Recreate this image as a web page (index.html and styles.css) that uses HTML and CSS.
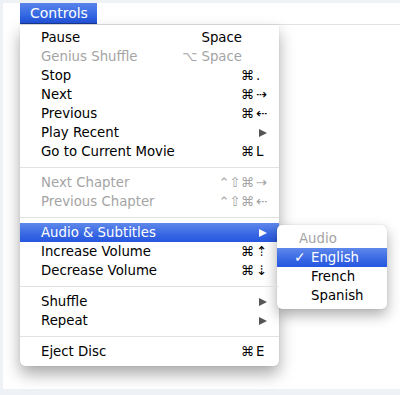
FILE: index.html
```html
<!DOCTYPE html>
<html lang="en">
<head>
    <meta charset="UTF-8">
    <title>Controls Menu</title>
    <link rel="stylesheet" href="styles.css">
</head>
<body>
    <div class="screen">
        <div class="menubar">
            <span class="title">Controls</span>
        </div>

        <div class="menu">
            <div class="item"><span class="label">Pause</span><span class="mods spaced">Space</span><span class="key"></span></div>
            <div class="item off"><span class="label">Genius Shuffle</span><span class="mods spaced">&#8997; Space</span><span class="key"></span></div>
            <div class="item"><span class="label">Stop</span><span class="mods">&#8984;</span><span class="key">.</span></div>
            <div class="item"><span class="label">Next</span><span class="mods">&#8984;</span><span class="key">&#8674;</span></div>
            <div class="item"><span class="label">Previous</span><span class="mods">&#8984;</span><span class="key">&#8672;</span></div>
            <div class="item"><span class="label">Play Recent</span><span class="key"><i class="arrow"></i></span></div>
            <div class="item"><span class="label">Go to Current Movie</span><span class="mods">&#8984;</span><span class="key">L</span></div>
            <div class="sep"></div>
            <div class="item off"><span class="label">Next Chapter</span><span class="mods">&#8963;&#8679;&#8984;</span><span class="key">&#8674;</span></div>
            <div class="item off"><span class="label">Previous Chapter</span><span class="mods">&#8963;&#8679;&#8984;</span><span class="key">&#8672;</span></div>
            <div class="sep"></div>
            <div class="item on has-sub">
                <span class="label">Audio &amp; Subtitles</span><span class="key"><i class="arrow"></i></span>
                <div class="submenu">
                    <div class="subitem head">Audio</div>
                    <div class="subitem on"><span class="check">&#10003;</span>English</div>
                    <div class="subitem">French</div>
                    <div class="subitem">Spanish</div>
                </div>
            </div>
            <div class="item"><span class="label">Increase Volume</span><span class="mods">&#8984;</span><span class="key">&#8673;</span></div>
            <div class="item"><span class="label">Decrease Volume</span><span class="mods">&#8984;</span><span class="key">&#8675;</span></div>
            <div class="sep"></div>
            <div class="item"><span class="label">Shuffle</span><span class="key"><i class="arrow"></i></span></div>
            <div class="item"><span class="label">Repeat</span><span class="key"><i class="arrow"></i></span></div>
            <div class="sep"></div>
            <div class="item"><span class="label">Eject Disc</span><span class="mods">&#8984;</span><span class="key">E</span></div>
        </div>
    </div>
</body>
</html>
```

FILE: styles.css
```css
:root {
    --frame: #eef2f7;
    --text: #000;
    --disabled: #a4a4a4;
    --line: #e2e2e2;
    --select: linear-gradient(#5f88eb, #3767e3 60%, #2656df);
}

html, body {
    margin: 0;
    padding: 0;
}

body {
    width: 400px;
    height: 395px;
    background-color: var(--frame);
    font-family: "DejaVu Sans", "Liberation Sans", sans-serif;
    font-size: 13.3px;
    color: var(--text);
    overflow: hidden;
}

.screen {
    margin: 3px 0 0 3px;
    height: 386px;
    background-color: #fff;
}

.menubar {
    margin-left: 17px;
    height: 21px;
    border-bottom: 1px solid var(--line);
    display: flex;
}

.menubar .title {
    display: block;
    height: 21px;
    line-height: 21px;
    padding: 0 9px 0 10px;
    font-size: 14px;
    color: #fff;
    background: linear-gradient(#5a84ea, #3266e2 60%, #1f4fd8);
    box-shadow: inset 0 -1px 0 #17378f;
}

.menu {
    position: relative;
    margin-left: 17px;
    width: 259px;
    padding: 3px 0 5px;
    background-color: #fff;
    border-radius: 0 0 5px 5px;
    box-shadow: 0 8px 16px rgba(0, 0, 0, 0.34), 0 0 1px rgba(0, 0, 0, 0.25);
}

.item {
    position: relative;
    display: flex;
    align-items: center;
    height: 19px;
    padding: 0 11px 0 21px;
    white-space: nowrap;
}

.item .label {
    flex: 1;
}

.mods {
    text-align: right;
}

.mods.spaced {
    margin-right: 12px;
}

.key {
    width: 12px;
    margin-left: 2px;
    display: flex;
    justify-content: flex-end;
    align-items: center;
}

.mods + .key {
    justify-content: flex-start;
}

.arrow {
    display: block;
    width: 0;
    height: 0;
    margin-right: 1px;
    border-left: 8px solid #555;
    border-top: 4.5px solid transparent;
    border-bottom: 4.5px solid transparent;
}

.item.off {
    color: var(--disabled);
}

.item.on {
    color: #fff;
    background: var(--select);
}

.item.on .arrow {
    border-left-color: #fff;
}

.sep {
    height: 12px;
    position: relative;
}

.sep::after {
    content: "";
    position: absolute;
    left: 0;
    right: 0;
    top: 6px;
    height: 1px;
    background-color: var(--line);
}

.submenu {
    position: absolute;
    left: 257px;
    top: 2px;
    width: 110px;
    padding: 4px 0;
    background-color: #fff;
    border-radius: 5px;
    box-shadow: 0 6px 14px rgba(0, 0, 0, 0.32), 0 0 1px rgba(0, 0, 0, 0.3);
    color: var(--text);
}

.subitem {
    position: relative;
    height: 19px;
    line-height: 19px;
    padding-left: 34px;
}

.subitem.head {
    padding-left: 22px;
    color: var(--disabled);
}

.subitem.on {
    color: #fff;
    background: var(--select);
}

.check {
    position: absolute;
    left: 17px;
    top: 0;
    font-size: 14px;
    font-weight: bold;
}
```
